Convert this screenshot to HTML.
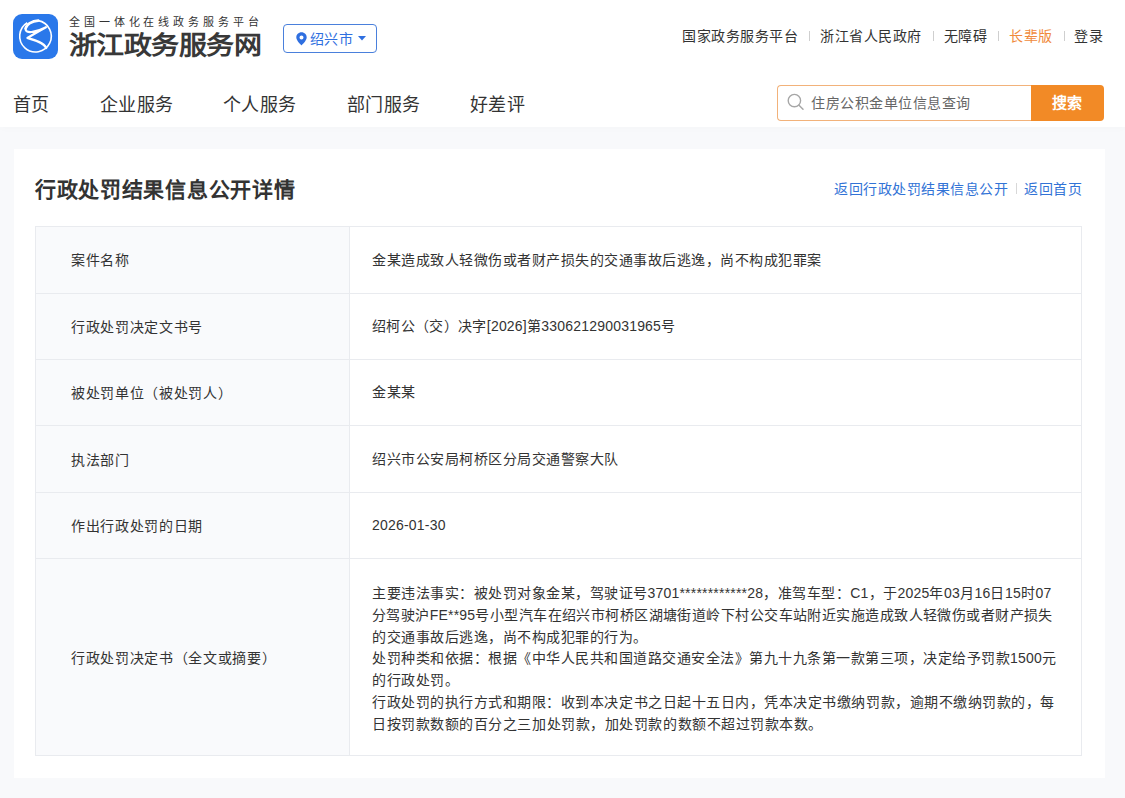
<!DOCTYPE html>
<html lang="zh-CN">
<head>
<meta charset="utf-8">
<style>
*{margin:0;padding:0;box-sizing:border-box;}
html,body{width:1125px;height:798px;overflow:hidden;}
body{font-family:"Liberation Sans",sans-serif;background:#f8f9fb;color:#333;position:relative;}
.abs{position:absolute;white-space:nowrap;}
.header{position:absolute;left:0;top:0;width:1125px;height:126.5px;background:#fff;box-shadow:0 2px 8px rgba(30,40,60,0.015);}
.logo{position:absolute;left:13px;top:13.5px;width:45.4px;height:45px;border-radius:9px;background:#2a78ea;overflow:hidden;}
.slogan{left:69px;top:15.5px;font-size:11px;line-height:13px;letter-spacing:3.88px;color:#333;}
.brand{left:69px;top:30.5px;font-weight:900;font-size:28px;letter-spacing:-0.55px;line-height:34px;color:#383838;transform:scaleY(0.9);transform-origin:0 0;}
.city{left:283px;top:23.5px;width:93.5px;height:29.5px;border:1px solid #4a80dc;border-radius:4px;}
.citytxt{left:309.5px;top:29px;font-size:14px;letter-spacing:0.6px;line-height:20px;color:#2f6fe0;}
.toplinks{top:25.5px;font-size:14px;letter-spacing:0.5px;line-height:20px;color:#333;}
.sep{width:1px;height:10px;top:31px;background:#cfcfcf;}
.nav{top:95px;font-size:18px;letter-spacing:0.3px;line-height:20px;color:#333;}
.search{left:777px;top:84.5px;width:256px;height:36px;border:1px solid #f2b27a;border-right:none;border-radius:4px 0 0 4px;background:#fff;}
.ph{left:811px;top:93px;font-size:14px;letter-spacing:0.5px;line-height:20px;color:#666;}
.sbtn{left:1030.5px;top:84.5px;width:73.5px;height:36px;background:#f28a26;border-radius:0 4px 4px 0;color:#fff;font-weight:bold;font-size:15px;letter-spacing:0.3px;line-height:35px;text-align:center;}
.card{position:absolute;left:14px;top:149px;width:1091px;height:629px;background:#fff;}
.title{left:35px;top:176.2px;font-size:21px;letter-spacing:0.7px;line-height:28px;font-weight:bold;color:#333;}
.links{top:179px;font-size:14px;letter-spacing:0.5px;line-height:20px;color:#3273d6;}
.tbl{position:absolute;left:35px;top:226px;width:1047px;height:530px;border:1px solid #e9ebef;}
.hl{position:absolute;left:0;width:1045px;height:1px;background:#e9ebef;}
.lab{position:absolute;left:0;top:0;width:314px;height:528px;background:#f9fafc;border-right:1px solid #e9ebef;}
.t{font-size:14px;letter-spacing:0.5px;line-height:20px;color:#333;}
.lt{left:71px;letter-spacing:0.67px;margin-top:1px;}
.vt{left:372px;}
.n{letter-spacing:0.2px;}
.para{left:372px;top:583.3px;font-size:14px;letter-spacing:0.5px;line-height:21.7px;color:#333;}
</style>
</head>
<body>
<div class="header"></div>
<div class="logo">
<svg width="45" height="45" viewBox="0 0 45 45" style="position:absolute;left:0;top:0">
<path d="M14.29 8.70 A15.8 15.8 0 1 0 25.24 6.64" fill="none" stroke="#fff" stroke-width="1.6"/>
<path d="M25.24 6.64 C19 6.9 13.4 10.2 12.6 14.6" fill="none" stroke="#fff" stroke-width="2.6" stroke-linecap="round"/>
<path d="M12.6 14.6 C12.3 17.6 15 18.3 18.5 18 C24 17.4 30 14.8 33 13.2 C27 16.5 20 20.5 14.4 24 C22 26.2 31 28.5 33.3 34" fill="none" stroke="#fff" stroke-width="2.2" stroke-linejoin="round" stroke-linecap="round"/>
</svg>
</div>
<div class="abs slogan">全国一体化在线政务服务平台</div>
<div class="abs brand">浙江政务服务网</div>
<div class="abs city"></div>
<svg class="abs" style="left:296px;top:32px" width="11" height="14" viewBox="0 0 11 14"><path d="M5.5 0.3 C2.5 0.3 0.3 2.6 0.3 5.4 C0.3 8.6 5.5 13.3 5.5 13.3 C5.5 13.3 10.7 8.6 10.7 5.4 C10.7 2.6 8.5 0.3 5.5 0.3 Z M5.5 3.4 A2 2 0 1 1 5.5 7.4 A2 2 0 1 1 5.5 3.4 Z" fill="#2f6fe0" fill-rule="evenodd"/></svg>
<div class="abs citytxt">绍兴市</div>
<svg class="abs" style="left:357.5px;top:35.8px" width="8" height="5" viewBox="0 0 8 5"><path d="M0 0 L8 0 L4 4.6 Z" fill="#2f6fe0"/></svg>
<div class="abs toplinks" style="left:682px">国家政务服务平台</div>
<div class="abs sep" style="left:809px"></div>
<div class="abs toplinks" style="left:820px">浙江省人民政府</div>
<div class="abs sep" style="left:933px"></div>
<div class="abs toplinks" style="left:943.5px">无障碍</div>
<div class="abs sep" style="left:998px"></div>
<div class="abs toplinks" style="left:1009px;color:#f08a3c">长辈版</div>
<div class="abs sep" style="left:1064px"></div>
<div class="abs toplinks" style="left:1074px">登录</div>
<div class="abs nav" style="left:13px">首页</div>
<div class="abs nav" style="left:100px">企业服务</div>
<div class="abs nav" style="left:223px">个人服务</div>
<div class="abs nav" style="left:347px">部门服务</div>
<div class="abs nav" style="left:470px">好差评</div>
<div class="abs search"></div>
<svg class="abs" style="left:787px;top:93px" width="18" height="18" viewBox="0 0 18 18"><circle cx="7.4" cy="7.6" r="6.2" fill="none" stroke="#a6a6a6" stroke-width="1.4"/><path d="M12 12.2 L16 16.2" stroke="#a6a6a6" stroke-width="1.5" stroke-linecap="round"/></svg>
<div class="abs ph">住房公积金单位信息查询</div>
<div class="abs sbtn">搜索</div>
<div class="card"></div>
<div class="abs title">行政处罚结果信息公开详情</div>
<div class="abs links" style="left:834px">返回行政处罚结果信息公开</div>
<div class="abs sep" style="left:1016px;top:183px;height:11px;background:#d8d8d8"></div>
<div class="abs links" style="left:1024px">返回首页</div>
<div class="tbl">
<div class="lab"></div>
<div class="hl" style="top:66px"></div>
<div class="hl" style="top:132px"></div>
<div class="hl" style="top:198px"></div>
<div class="hl" style="top:265px"></div>
<div class="hl" style="top:331px"></div>
</div>
<div class="abs t lt" style="top:249px">案件名称</div>
<div class="abs t vt" style="top:250px">金某造成致人轻微伤或者财产损失的交通事故后逃逸，尚不构成犯罪案</div>
<div class="abs t lt" style="top:316px">行政处罚决定文书号</div>
<div class="abs t vt" style="top:316px;letter-spacing:0.35px">绍柯公（交）决字<span class="n">[2026]</span>第<span class="n">330621290031965</span>号</div>
<div class="abs t lt" style="top:382px">被处罚单位（被处罚人）</div>
<div class="abs t vt" style="top:382px">金某某</div>
<div class="abs t lt" style="top:449px">执法部门</div>
<div class="abs t vt" style="top:449px">绍兴市公安局柯桥区分局交通警察大队</div>
<div class="abs t lt" style="top:515px">作出行政处罚的日期</div>
<div class="abs t vt" style="top:515px"><span class="n">2026-01-30</span></div>
<div class="abs t lt" style="top:647px">行政处罚决定书（全文或摘要）</div>
<div class="abs para">
<div id="l1">主要违法事实：被处罚对象金某，驾驶证号<span class="n">3701************28</span>，准驾车型：<span class="n">C1</span>，于<span class="n">2025</span>年<span class="n">03</span>月<span class="n">16</span>日<span class="n">15</span>时<span class="n">07</span></div>
<div id="l2" style="letter-spacing:0.44px">分驾驶沪<span class="n">FE**95</span>号小型汽车在绍兴市柯桥区湖塘街道岭下村公交车站附近实施造成致人轻微伤或者财产损失</div>
<div id="l3">的交通事故后逃逸，尚不构成犯罪的行为。</div>
<div id="l4">处罚种类和依据：根据《中华人民共和国道路交通安全法》第九十九条第一款第三项，决定给予罚款<span class="n">1500</span>元</div>
<div id="l5">的行政处罚。</div>
<div id="l6" style="letter-spacing:0.53px">行政处罚的执行方式和期限：收到本决定书之日起十五日内，凭本决定书缴纳罚款，逾期不缴纳罚款的，每</div>
<div id="l7" style="letter-spacing:0.55px">日按罚款数额的百分之三加处罚款，加处罚款的数额不超过罚款本数。</div>
</div>
</body>
</html>
